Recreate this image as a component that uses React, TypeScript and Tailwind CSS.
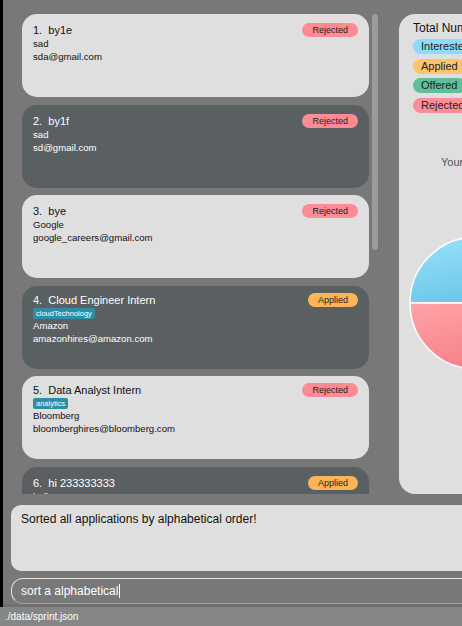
const cards = [
  { name: 'by1e', company: 'sad', email: 'sda@gmail.com', status: 'Rejected', dark: false },
  { name: 'by1f', company: 'sad', email: 'sd@gmail.com', status: 'Rejected', dark: true },
  { name: 'bye', company: 'Google', email: 'google_careers@gmail.com', status: 'Rejected', dark: false },
  { name: 'Cloud Engineer Intern', tag: 'cloudTechnology', company: 'Amazon', email: 'amazonhires@amazon.com', status: 'Applied', dark: true },
  { name: 'Data Analyst Intern', tag: 'analytics', company: 'Bloomberg', email: 'bloomberghires@bloomberg.com', status: 'Rejected', dark: false },
  { name: 'hi 233333333', company: 'hello', email: 'hello@gmail.com', status: 'Applied', dark: true },
];

const legend = [
  { label: 'Interested', cls: 'bg-[#8ddcfb]' },
  { label: 'Applied', cls: 'bg-[#ffc46b]' },
  { label: 'Offered', cls: 'bg-[#5fc097]' },
  { label: 'Rejected', cls: 'bg-[#ff8e96]' },
];

function Card({ index, card }: { index: number; card: (typeof cards)[number] }) {
  return (
    <div
      className={`h-[83px] shrink-0 rounded-[15px] px-[11px] ${
        card.dark ? 'bg-[#5a6062] text-white' : 'bg-[#dfdfdf] text-[#111]'
      } ${card.tag ? 'pt-[7px]' : 'pt-[9px]'}`}
    >
      <div className="flex h-[14px] items-center justify-between">
        <span className="whitespace-pre text-[11px] leading-[14px]">{`${index}.  ${card.name}`}</span>
        <span
          className={`rounded-full px-[10px] text-[9px] leading-[14px] text-[#222] ${
            card.status === 'Applied' ? 'bg-[#ffb457]' : 'bg-[#ff8c94]'
          }`}
        >
          {card.status}
        </span>
      </div>
      {card.tag && (
        <div className="mt-[1px] flex">
          <span className="h-[11px] rounded-[2px] bg-[#2f8ea3] px-[3px] text-[7.5px] leading-[11px] text-white">
            {card.tag}
          </span>
        </div>
      )}
      <div className="text-[9.6px] leading-[13px]">{card.company}</div>
      <div className="text-[9.6px] leading-[13px]">{card.email}</div>
    </div>
  );
}

export default function App() {
  return (
    <div className="flex h-[626px] w-[462px] flex-col overflow-hidden bg-[#787878] font-['Liberation_Sans',Arial,sans-serif]">
      <div className="flex min-h-0 flex-1 flex-col border-l-[3px] border-black pt-[14px]">
        <div className="flex h-[480px] shrink-0 pl-[19px]">
          <div className="flex h-full w-[347px] shrink-0 flex-col gap-[7.5px] overflow-hidden">
            {cards.map((c, i) => (
              <Card key={i} index={i + 1} card={c} />
            ))}
          </div>
          <div className="ml-[3px] h-[236px] w-[6px] shrink-0 rounded-full bg-[#9b9b9b]" />
          <div className="ml-[21px] h-full w-[220px] shrink-0 overflow-hidden rounded-[16px] bg-[#dfdfdf] pl-[14px] pt-[7px]">
            <div className="whitespace-nowrap text-[12px] leading-[14px] text-[#111]">
              Total Number of Applications
            </div>
            <div className="mt-[4px] flex flex-col items-start gap-[4.5px]">
              {legend.map((l) => (
                <span
                  key={l.label}
                  className={`rounded-full px-[8px] text-[11px] leading-[15px] text-[#222] ${l.cls}`}
                >
                  {l.label}
                </span>
              ))}
            </div>
            <div className="ml-[28px] mt-[42px] whitespace-nowrap text-[11px] leading-[14px] text-[#555]">
              Your Applications
            </div>
            <svg width="200" height="140" viewBox="0 0 200 140" className="mt-[66px] overflow-visible">
              <defs>
                <linearGradient id="blue" x1="0" y1="0" x2="0.4" y2="1">
                  <stop offset="0" stopColor="#99e2f9" />
                  <stop offset="1" stopColor="#6cc6e8" />
                </linearGradient>
                <linearGradient id="pink" x1="0" y1="0" x2="0.4" y2="1">
                  <stop offset="0" stopColor="#ffa3a7" />
                  <stop offset="1" stopColor="#f6818a" />
                </linearGradient>
              </defs>
              <path d="M -3 68 A 66 66 0 0 1 129 68 Z" fill="url(#blue)" stroke="#ffffff" strokeWidth="1.5" />
              <path d="M 129 68 A 66 66 0 0 1 -3 68 Z" fill="url(#pink)" stroke="#ffffff" strokeWidth="1.5" />
            </svg>
          </div>
        </div>
        <div className="ml-[8px] mt-[11px] h-[66px] w-[520px] shrink-0 rounded-[10px] bg-[#dfdfdf] pl-[10px] pt-[7px] text-[12px] leading-[14px] text-[#111]">
          Sorted all applications by alphabetical order!
        </div>
        <div className="ml-[8px] mt-[7px] flex h-[26px] w-[520px] shrink-0 items-center rounded-l-[12px] border border-[#e4e4e4] border-b-[#a2a2a2] pl-[9px] text-[12px] text-white">
          <span>sort a alphabetical</span>
          <span className="ml-[1px] h-[14px] w-[1px] bg-white" />
        </div>
        <div className="h-[3px] shrink-0 bg-[#6f6f6f]" />
      </div>
      <div className="h-[19px] shrink-0 bg-[#868686] pl-[5px] text-[10px] leading-[19px] text-white">
        ./data/sprint.json
      </div>
    </div>
  );
}
